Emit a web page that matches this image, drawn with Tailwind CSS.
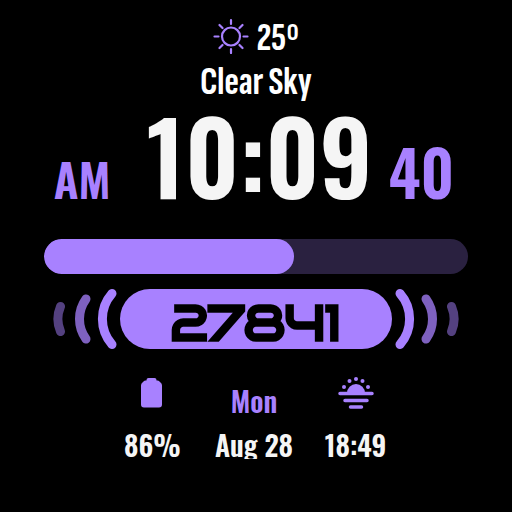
<!DOCTYPE html>
<html lang="en">
<head>
<meta charset="utf-8">
<meta name="viewport" content="width=device-width, initial-scale=1">
<title>Watch face</title>
<script src="https://cdn.jsdelivr.net/npm/@tailwindcss/browser@4"></script>
</head>
<body class="bg-black">
<main class="flex min-h-screen flex-col items-center bg-black pt-4 font-['Oswald','Roboto_Condensed','Liberation_Sans_Narrow','Liberation_Sans',sans-serif] font-semibold text-[#f5f5f5]">
  <section class="flex flex-col items-center font-['Sofia_Sans_Extra_Condensed','Barlow_Condensed','Oswald','Liberation_Sans_Narrow',sans-serif] font-bold text-white" aria-label="Weather">
    <div class="flex h-10 items-center gap-2">
      <svg class="size-9 text-[#a881ff]" viewBox="0 0 36 36" fill="none" stroke="currentColor" stroke-width="2.200" stroke-linecap="round" aria-hidden="true">
        <circle cx="18" cy="18.500" r="9"/>
        <path d="M18 2v4M18 31v4M1.500 18.500h4M30.500 18.500h4M6.500 7l3 3M26.500 27l3 3M6.500 30l3-3M26.500 10l3-3"/>
      </svg>
      <span class="pt-1 text-[40px] leading-10">25<span class="font-['Oswald','Liberation_Sans_Narrow',sans-serif] text-[32px] leading-none font-normal">º</span></span>
    </div>
    <p class="pt-1.5 text-[40px] leading-10">Clear Sky</p>
  </section>

  <section class="flex items-baseline justify-center whitespace-nowrap pr-1" aria-label="Time">
    <span class="mr-9 text-[46px] font-semibold leading-none text-[#a881ff]">AM</span>
    <time class="mr-4 text-[100px] leading-[104px]">10:09</time>
    <span class="text-[62px] leading-none text-[#a881ff]">40</span>
  </section>

  <div class="mt-[33px] h-[35px] w-[83%] overflow-hidden rounded-full bg-[#2a2140]" role="progressbar" aria-label="Goal" aria-valuenow="59" aria-valuemin="0" aria-valuemax="100">
    <div class="h-full rounded-full bg-[#a881ff]" style="width:59%"></div>
  </div>

  <section class="mt-[15px] flex items-center justify-center gap-[3px]" aria-label="Steps">
    <svg class="h-15 w-16 text-[#a881ff]" viewBox="0 0 64 60" fill="none" stroke="currentColor" stroke-width="9" stroke-linecap="round" aria-hidden="true">
      <path d="M59 4.500A38.700 38.700 0 0 0 59 55.500"/>
      <path d="M33 10A34 34 0 0 0 33 50" opacity=".75"/>
      <path d="M7.500 17.500A32 32 0 0 0 7.500 42.500" opacity=".5"/>
    </svg>
    <div class="flex h-15 w-[272px] items-center justify-center rounded-full bg-[#a881ff] pt-1.5 font-['Bruno_Ace','Bruno_Ace_SC','Audiowide','Zen_Dots','Orbitron','DejaVu_Sans',sans-serif] text-[49px] font-black leading-none text-black [-webkit-text-stroke:2px_black]">27841</div>
    <svg class="h-15 w-16 text-[#a881ff]" viewBox="0 0 64 60" fill="none" stroke="currentColor" stroke-width="9" stroke-linecap="round" aria-hidden="true">
      <path d="M5 4.500A38.700 38.700 0 0 1 5 55.500"/>
      <path d="M31 10A34 34 0 0 1 31 50" opacity=".75"/>
      <path d="M56.500 17.500A32 32 0 0 1 56.500 42.500" opacity=".5"/>
    </svg>
  </section>

  <section class="mt-7 w-full pr-1 text-[28px]" aria-label="Status">
    <div class="mx-auto grid w-[60%] grid-cols-3 text-center">
      <div class="flex flex-col items-center">
        <div class="flex h-12 items-start">
          <svg class="h-8 w-6 text-[#a881ff]" viewBox="0 0 24 32" fill="currentColor" aria-hidden="true">
            <path d="M6.500 3.500V3Q6.500 1 8.500 1h6q2 0 2 2v.5h1q1 0 2 1l1 1q1.500 1 1.500 3v19q0 3-3 3H4q-3 0-3-3v-19q0-2 1.500-3l1-1q1-1 2-1z"/>
          </svg>
        </div>
        <p class="leading-10">86%</p>
      </div>
      <div class="flex flex-col items-center whitespace-nowrap">
        <div class="flex h-12 items-end pb-1 leading-10 text-[#a881ff]">Mon</div>
        <p class="h-[34px] overflow-hidden leading-10">Aug 28</p>
      </div>
      <div class="flex flex-col items-center">
        <div class="flex h-12 items-start">
          <svg class="h-8 w-9 text-[#a881ff]" viewBox="0 0 36 32" fill="currentColor" aria-hidden="true">
            <path d="M9 16a9 9 0 0 1 18 0z"/>
            <circle cx="18" cy="2" r="2"/><circle cx="11.500" cy="4" r="2"/><circle cx="24.500" cy="4" r="2"/><circle cx="6" cy="10" r="2"/><circle cx="30" cy="10" r="2"/>
            <path d="M2 16.500h32M7 23.500h22M12.500 30h11" fill="none" stroke="currentColor" stroke-width="3.500" stroke-linecap="round"/>
          </svg>
        </div>
        <p class="leading-10">18:49</p>
      </div>
    </div>
  </section>
</main>
</body>
</html>
